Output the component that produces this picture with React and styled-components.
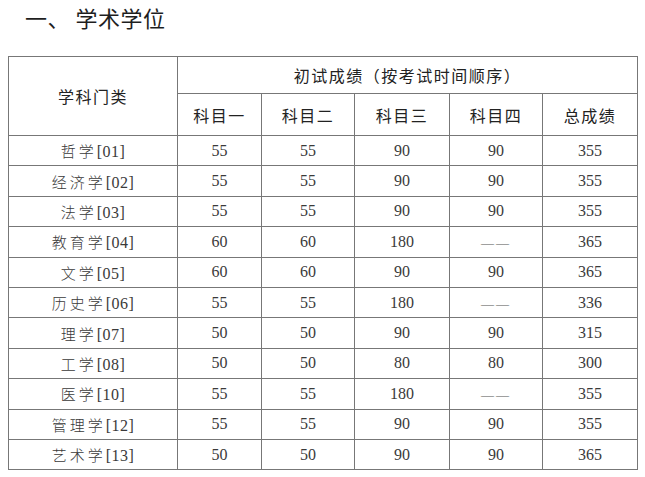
import React from 'react';
import styled, {createGlobalStyle} from 'styled-components';

const GlobalStyle = createGlobalStyle`
  html, body {
    margin: 0;
    padding: 0;
    background: #fff;
  }
`;

const Page = styled.div`
  width: 645px;
  height: 477px;
  padding: 0 0 0 8px;
  box-sizing: border-box;
  font-family: "Liberation Serif", "Noto Sans CJK SC", serif;
  color: #333;
`;

const Title = styled.h1`
  margin: 0;
  padding: 3px 0 0 17px;
  height: 56px;
  box-sizing: border-box;
  font-family: "Noto Sans CJK SC", sans-serif;
  font-size: 22px;
  font-weight: 400;
  line-height: 28px;
  color: #1e1e1e;
  letter-spacing: 0.5px;
`;

const Table = styled.table`
  border-collapse: collapse;
  table-layout: fixed;
  width: 629px;
  border: 1.5px solid #666;
`;

const HeadCell = styled.th`
  border: 1px solid #777;
  padding: 0;
  height: ${p => p.h}px;
  font-family: "Noto Sans CJK SC", sans-serif;
  font-size: 16px;
  font-weight: 400;
  letter-spacing: 1.5px;
  color: #222;
  text-align: center;
  vertical-align: middle;
`;

const Cell = styled.td`
  border: 1px solid #777;
  padding: 0;
  height: 29.4px;
  font-size: 16px;
  text-align: center;
  vertical-align: middle;
  color: #3a3a3a;
`;

const Subject = styled.span`
  font-family: "Noto Sans CJK SC", sans-serif;
  font-weight: 300;
  font-size: 15px;
  letter-spacing: 3px;
`;

const Code = styled.span`
  font-family: "Liberation Serif", serif;
  font-size: 16px;
  letter-spacing: 0.5px;
`;

const Dash = styled.span`
  font-size: 13px;
  letter-spacing: 2px;
  color: #555;
`;

const rows = [
  ['哲学', '01', 55, 55, 90, 90, 355],
  ['经济学', '02', 55, 55, 90, 90, 355],
  ['法学', '03', 55, 55, 90, 90, 355],
  ['教育学', '04', 60, 60, 180, null, 365],
  ['文学', '05', 60, 60, 90, 90, 365],
  ['历史学', '06', 55, 55, 180, null, 336],
  ['理学', '07', 50, 50, 90, 90, 315],
  ['工学', '08', 50, 50, 80, 80, 300],
  ['医学', '10', 55, 55, 180, null, 355],
  ['管理学', '12', 55, 55, 90, 90, 355],
  ['艺术学', '13', 50, 50, 90, 90, 365],
];

export default function App() {
  return <Page>
    <GlobalStyle />
    <Title>一、 学术学位</Title>
    <Table>
      <colgroup>
        <col style={{width: 169}} />
        <col style={{width: 84}} />
        <col style={{width: 93}} />
        <col style={{width: 95}} />
        <col style={{width: 93}} />
        <col style={{width: 95}} />
      </colgroup>
      <thead>
        <tr>
          <HeadCell rowSpan={2} h={36}>学科门类</HeadCell>
          <HeadCell colSpan={5} h={36}>初试成绩（按考试时间顺序）</HeadCell>
        </tr>
        <tr>
          <HeadCell h={41}>科目一</HeadCell>
          <HeadCell h={41}>科目二</HeadCell>
          <HeadCell h={41}>科目三</HeadCell>
          <HeadCell h={41}>科目四</HeadCell>
          <HeadCell h={41}>总成绩</HeadCell>
        </tr>
      </thead>
      <tbody>
        {rows.map(([name, code, ...scores]) => (
          <tr key={code}>
            <Cell><Subject>{name}</Subject><Code>[{code}]</Code></Cell>
            {scores.map((s, i) => (
              <Cell key={i}>{s === null ? <Dash>——</Dash> : s}</Cell>
            ))}
          </tr>
        ))}
      </tbody>
    </Table>
  </Page>;
}
